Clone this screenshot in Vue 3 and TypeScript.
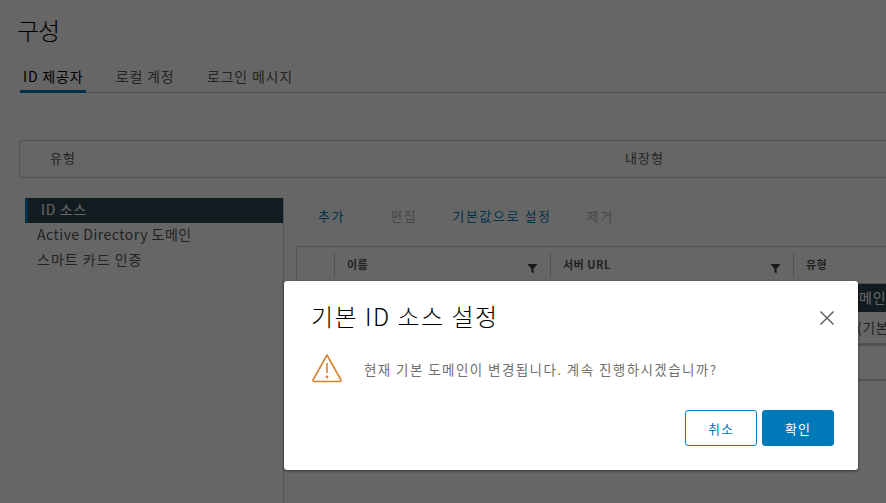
<script setup lang="ts">
const tabs = ['ID 제공자', '로컬 계정', '로그인 메시지']
const side = ['ID 소스', 'Active Directory 도메인', '스마트 카드 인증']
const actions = [
  { label: '추가', on: true },
  { label: '편집', on: false },
  { label: '기본값으로 설정', on: true },
  { label: '제거', on: false },
]
</script>

<template>
  <div class="page">
    <h1 class="title">구성</h1>
    <nav class="tabs">
      <span v-for="(t, i) in tabs" :key="t" class="tab" :class="{ active: i === 0 }">{{ t }}</span>
    </nav>
    <section class="info">
      <span class="info-label">유형</span>
      <span class="info-value">내장형</span>
    </section>
    <div class="split">
      <aside class="side">
        <div v-for="(s, i) in side" :key="s" class="side-item" :class="['item-' + i, { active: i === 0 }]">{{ s }}</div>
      </aside>
      <main class="content">
        <div class="actions">
          <span v-for="a in actions" :key="a.label" class="action" :class="{ off: !a.on }">{{ a.label }}</span>
        </div>
        <div class="grid">
          <div class="head">
            <div class="cell check"></div>
            <div class="cell name">
              <span>이름</span>
              <svg class="filter" viewBox="0 0 10 10"><path d="M.5 1h9L6 5.2V9.5L4 8.2V5.2z" /></svg>
            </div>
            <div class="cell url">
              <span>서버 URL</span>
              <svg class="filter" viewBox="0 0 10 10"><path d="M.5 1h9L6 5.2V9.5L4 8.2V5.2z" /></svg>
            </div>
            <div class="cell type"><span>유형</span></div>
          </div>
          <div class="row selected"><span class="row-text">도메인</span></div>
          <div class="row second"><span class="row-text">(기본</span></div>
          <div class="row third"></div>
        </div>
      </main>
    </div>

    <div class="backdrop"></div>
    <div class="modal" role="dialog">
      <header class="modal-head">
        <h2 class="modal-title">기본 ID 소스 설정</h2>
        <svg class="close" viewBox="0 0 14 14">
          <path d="M.5.5l13 13M13.5.5l-13 13" />
        </svg>
      </header>
      <div class="modal-body">
        <svg class="warn" viewBox="0 0 32 30">
          <path class="warn-line" d="M16 2L2 27a1.2 1.2 0 0 0 1 1.5h26a1.2 1.2 0 0 0 1-1.5z" />
          <path class="warn-line" d="M16 10v10" />
          <circle class="warn-dot" cx="16" cy="24" r="1.4" />
        </svg>
        <p class="message">현재 기본 도메인이 변경됩니다. 계속 진행하시겠습니까?</p>
      </div>
      <footer class="modal-foot">
        <button class="btn outline">취소</button>
        <button class="btn solid">확인</button>
      </footer>
    </div>
  </div>
</template>

<style>
html, body { margin: 0; overflow: hidden; }
</style>

<style scoped>
.page {
  position: relative;
  width: 886px;
  height: 503px;
  overflow: hidden;
  background: #fff;
  box-sizing: border-box;
  padding-top: 15px;
  font-family: "Noto Sans CJK KR", "Noto Sans", sans-serif;
  color: #565656;
}
.title {
  margin: 0 0 0 17px;
  font-size: 24px;
  line-height: 30px;
  font-weight: 300;
  color: #000;
  letter-spacing: -1px;
}
.tabs {
  display: flex;
  gap: 26.5px;
  margin: 17px 0 0 20px;
  height: 31px;
  border-bottom: 1px solid #ccc;
  box-sizing: border-box;
}
.tab {
  font-size: 14px;
  line-height: 28px;
  padding: 0 3px;
  height: 31px;
  box-sizing: border-box;
  color: #575757;
  letter-spacing: .8px;
}
.tab.active {
  color: #000;
  border-bottom: 3px solid #0079b8;
}
.info {
  display: flex;
  align-items: center;
  height: 38px;
  margin: 47px -10px 0 19px;
  padding-bottom: 4px;
  border: 1px solid #ccc;
  border-radius: 3px;
  box-sizing: border-box;
  font-size: 13px;
  color: #565656;
}
.info-label { margin-left: 30px; width: 575px; letter-spacing: 1px; }
.info-value { letter-spacing: 1px; }
.split {
  display: flex;
  margin: 20px 0 0 25px;
  height: 400px;
}
.side {
  width: 259px;
  box-sizing: border-box;
  border-right: 1px solid #ccc;
  flex: none;
}
.side-item {
  height: 25px;
  line-height: 22px;
  font-size: 14px;
  padding-left: 12px;
  color: #565656;
}
.item-0 { letter-spacing: .6px; }
.item-1 { letter-spacing: .5px; }
.item-2 { letter-spacing: 1px; }
.side-item.active {
  background: #2f4550;
  border-left: 3px solid #0079b8;
  padding-left: 13px;
  color: #fff;
}
.content { flex: 1; min-width: 0; padding-left: 12px; }
.actions {
  display: flex;
  height: 48px;
  align-items: flex-start;
  padding: 9px 0 0 22px;
  box-sizing: border-box;
  gap: 35px;
}
.action {
  font-size: 13px;
  line-height: 18px;
  letter-spacing: 1.6px;
  color: #0079b8;
  white-space: nowrap;
}
.action.off { color: #b3b3b3; }
.action:nth-child(2) { margin-left: 10px; }
.grid {
  width: 640px;
  border: 1px solid #ccc;
  border-radius: 3px;
  box-sizing: border-box;
}
.head {
  display: flex;
  height: 37px;
  padding-top: 6px;
  box-sizing: border-box;
  border-bottom: 1px solid #ccc;
  font-size: 11px;
  font-weight: 700;
  letter-spacing: .5px;
  color: #565656;
}
.cell {
  position: relative;
  height: 25px;
  box-sizing: border-box;
  padding: 3px 0 0 12px;
  border-right: 1px solid #ccc;
  flex: none;
}
.check { width: 38px; padding: 0; }
.name { width: 216px; }
.url { width: 243px; }
.type { border-right: 0; }
.filter {
  position: absolute;
  right: 12px;
  top: 10px;
  width: 11px;
  height: 11px;
  fill: #3f3f3f;
}
.row {
  position: relative;
  box-sizing: border-box;
  font-size: 14px;
  white-space: nowrap;
  overflow: hidden;
}
.selected {
  height: 28px;
  line-height: 27px;
  background: #2f4550;
  color: #fff;
  padding-left: 548px;
  letter-spacing: 1px;
}
.second {
  height: 34px;
  line-height: 30px;
  border-bottom: 3px solid #ccc;
  color: #565656;
  padding-left: 560px;
  letter-spacing: .5px;
}
.third { height: 34px; border-bottom: 1px solid #ccc; }
.backdrop {
  position: absolute;
  inset: 0;
  background: rgba(0, 0, 0, .6);
}
.modal {
  position: absolute;
  left: 284px;
  top: 281px;
  width: 574px;
  height: 189px;
  box-sizing: border-box;
  padding: 0 24px 0 27px;
  background: #fff;
  border-radius: 3px;
  box-shadow: 0 1px 3px rgba(0, 0, 0, .5);
}
.modal-head {
  display: flex;
  justify-content: space-between;
  align-items: flex-start;
  height: 64px;
  padding-top: 18px;
  box-sizing: border-box;
}
.modal-title {
  margin: 0;
  font-size: 24px;
  line-height: 33px;
  font-weight: 300;
  color: #000;
  letter-spacing: 1.5px;
}
.close {
  width: 14px;
  height: 14px;
  margin: 12px 0 0 0;
  fill: none;
  stroke: #565656;
  stroke-width: 1.4;
}
.modal-body {
  display: flex;
  align-items: center;
  gap: 21px;
  height: 50px;
}
.warn {
  width: 32px;
  height: 30px;
  flex: none;
  margin-top: -5px;
}
.warn-line { fill: none; stroke: #d6832e; stroke-width: 1.6; stroke-linejoin: round; }
.warn-dot { fill: #d6832e; }
.message {
  margin: 0;
  margin-top: -3px;
  font-size: 13.5px;
  line-height: 20px;
  color: #707070;
  letter-spacing: 1.42px;
  white-space: nowrap;
}
.modal-foot {
  display: flex;
  justify-content: flex-end;
  gap: 5px;
  margin-top: 15px;
}
.btn {
  width: 72px;
  height: 36px;
  box-sizing: border-box;
  border-radius: 3px;
  font-family: inherit;
  font-size: 13px;
  letter-spacing: 1px;
  border: 1px solid #0079b8;
  padding: 0;
}
.outline { background: #fff; color: #0079b8; }
.solid { background: #0079b8; color: #fff; }
</style>
